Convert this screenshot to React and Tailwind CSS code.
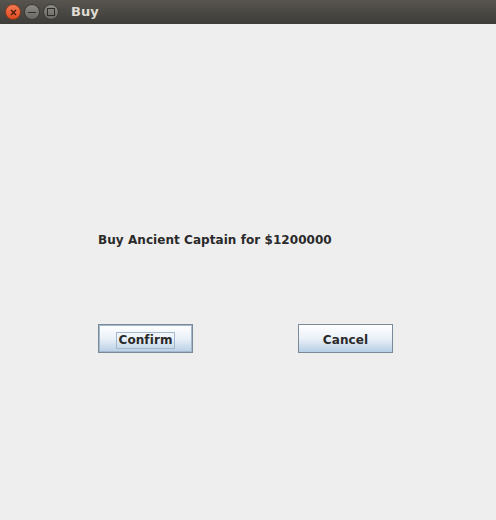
import React from 'react';

const font = { fontFamily: '"DejaVu Sans", sans-serif' };

function WindowButton({ kind }) {
  if (kind === 'close') {
    return (
      <div className="w-[16px] h-[16px] rounded-full bg-gradient-to-b from-[#f47a52] to-[#de4a1c] border border-[#8a3a1e] flex items-center justify-center">
        <svg width="7" height="7" viewBox="0 0 7 7">
          <path d="M1 1L6 6M6 1L1 6" stroke="#4a1a0a" strokeWidth="1.3" />
        </svg>
      </div>
    );
  }
  return (
    <div className="w-[16px] h-[16px] rounded-full bg-gradient-to-b from-[#8d8b85] to-[#6a6863] border border-[#3b3a36] flex items-center justify-center">
      {kind === 'min' ? (
        <div className="w-[8px] h-[1px] bg-[#2f2e2b]" />
      ) : (
        <div className="w-[8px] h-[8px] border border-[#2f2e2b]" />
      )}
    </div>
  );
}

function MetalButton({ label, focused }) {
  return (
    <button
      className={
        'w-[95px] h-[29px] pt-[3px] flex items-center justify-center bg-gradient-to-b from-[#ffffff] via-[#eaf1f8] to-[#b8cfe5] text-[12px] font-bold text-[#2a2a2a] tracking-[0.1px] ' +
        (focused
          ? 'border border-[#7a8a99] outline outline-1 outline-[#a3b8cc] -outline-offset-2'
          : 'border border-[#7a8a99]')
      }
      style={font}
    >
      <span className={focused ? 'border border-[#a3b8cc] px-[1px] leading-[15px]' : 'leading-[15px]'}>
        {label}
      </span>
    </button>
  );
}

export default function App() {
  return (
    <div className="w-[496px] h-[520px] flex flex-col bg-[#eeeeee]" style={font}>
      <div className="h-[24px] flex items-center bg-gradient-to-b from-[#58554f] to-[#3d3c38] pl-[5px]">
        <div className="flex items-center gap-[3px]">
          <WindowButton kind="close" />
          <WindowButton kind="min" />
          <WindowButton kind="max" />
        </div>
        <span className="ml-[12px] text-[13px] font-bold text-[#dfdbd2]">Buy</span>
      </div>
      <div className="flex-1 flex flex-col pl-[98px] pt-[208px]">
        <div className="text-[12px] font-bold text-[#2a2a2a] leading-[16px] tracking-[0.06px]">
          Buy Ancient Captain for $1200000
        </div>
        <div className="flex gap-[105px] mt-[76px]">
          <MetalButton label="Confirm" focused />
          <MetalButton label="Cancel" />
        </div>
      </div>
    </div>
  );
}
